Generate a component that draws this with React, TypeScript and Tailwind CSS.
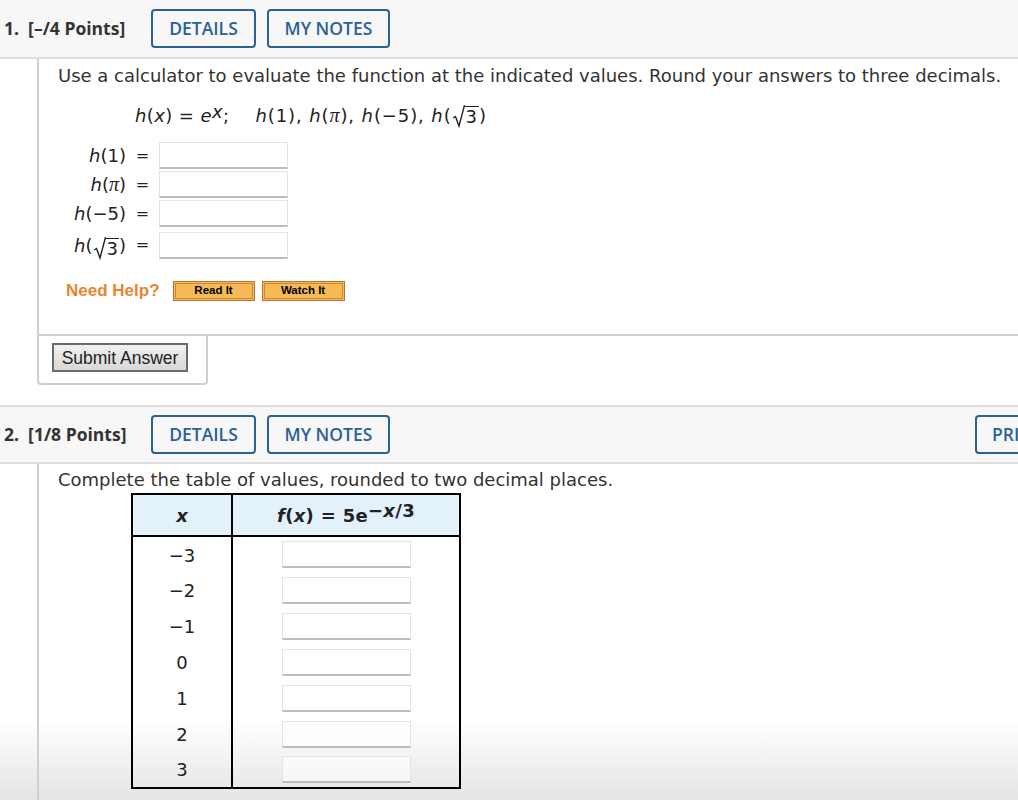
import React from 'react';

const verdana = { fontFamily: '"DejaVu Sans", Verdana, sans-serif' };
const arial = { fontFamily: 'Arial, "Liberation Sans", sans-serif' };

const HeaderBar: React.FC<{ num: string; points: string; print?: boolean; top?: boolean }> = ({ num, points, print, top }) => (
  <div
    className={`relative z-10 flex items-center h-[59px] bg-[#f7f7f7] border-b-2 border-[#dedede] overflow-hidden ${top ? '' : 'border-t-2'}`}
    style={{ fontFamily: '"Open Sans", sans-serif' }}
  >
    <div className="pl-[4px] w-[151px] text-[17.5px] font-bold text-[#333] whitespace-pre">
      {num}  {points}
    </div>
    <button className="h-[39px] w-[105px] border-2 border-[#2a6197] rounded-[4px] text-[17.5px] font-semibold text-[#2a6197]">
      DETAILS
    </button>
    <button className="ml-[11px] h-[39px] w-[123px] border-2 border-[#2a6197] rounded-[4px] text-[17.5px] font-semibold text-[#2a6197]">
      MY NOTES
    </button>
    {print && (
      <button className="ml-auto mr-[-80px] shrink-0 h-[39px] w-[123px] border-2 border-[#2a6197] rounded-[4px] text-[17.5px] font-semibold text-[#2a6197] text-left pl-[15px]">
        PRINTER
      </button>
    )}
  </div>
);

const Input: React.FC = () => (
  <div className="w-[129px] h-[27px] bg-white/60 border border-[#e3e3e3] border-b-[#bdbdbd] border-b-2 rounded-[1px]" />
);

const H = () => <i>h</i>;
const Pi = () => (
  <span style={{ fontFamily: '"Liberation Serif", serif' }} className="italic text-[20px] leading-none">
    π
  </span>
);

const Sqrt3 = () => (
  <span className="inline-flex items-end align-bottom">
    <svg width="13" height="24" viewBox="0 0 13 24" className="mb-[-1px]">
      <path d="M1 14 L3.5 12.5 L7 22 L12.5 1.2" fill="none" stroke="#222" strokeWidth="1.4" />
    </svg>
    <span className="border-t-[1.5px] border-[#222] leading-[20px] pl-[1px] pr-[1px]">3</span>
  </span>
);

const rows: { label: React.ReactNode; tall?: boolean }[] = [
  { label: <><H />(1)</> },
  { label: <><H />(<Pi />)</> },
  { label: <><H />(−5)</> },
  { label: <><H />(<Sqrt3 />)</>, tall: true },
];

const HelpButton: React.FC<{ label: string; w: string }> = ({ label, w }) => (
  <button className={`${w} h-[20px] bg-[#f5b955] border border-[#b8732e] p-[1px]`} style={arial}>
    <span className="flex items-center justify-center h-full border border-[#c98a3f] text-[11.5px] font-bold text-black">
      {label}
    </span>
  </button>
);

const tableX = ['−3', '−2', '−1', '0', '1', '2', '3'];

export default function App() {
  return (
    <div className="relative w-[1018px] h-[800px] overflow-hidden bg-white text-[#333]">
      {/* bottom fade behind content */}
      <div className="pointer-events-none absolute left-0 right-0 bottom-0 h-[80px] bg-gradient-to-b from-white to-[#e4e4e4]" />

      <HeaderBar num="1." points="[–/4 Points]" top />

      {/* Question 1 body */}
      <div className="relative ml-[37px] border-l-2 border-b-2 border-[#cfcfcf] pl-[19px] h-[277px]" style={verdana}>
        <p className="pt-[2px] text-[18px] leading-[30px] text-[#333] whitespace-nowrap">
          Use a calculator to evaluate the function at the indicated values. Round your answers to three decimals.
        </p>
        <div className="pl-[77px] mt-[8px] text-[18px] leading-[22px] text-[#222] flex items-end h-[28px]">
          <span className="tracking-[0.4px]">
            <H />(<i>x</i>) = <i>e</i>
            <sup className="text-[18px] relative top-[-4px]"><i>x</i></sup>;
          </span>
          <span className="ml-[26px] whitespace-pre tracking-[0.9px]">
            <H />(1), <H />(<Pi />), <H />(−5), <H />(<Sqrt3 />)
          </span>
        </div>
        <div className="mt-[14px] flex flex-col text-[18px] text-[#222]">
          {rows.map((r, i) => (
            <div key={i} className={`flex items-center ${r.tall ? 'h-[32px] mt-[1px]' : 'h-[29px]'}`}>
              <div className="w-[68px] whitespace-nowrap text-right">
                <span>{r.label}</span>
              </div>
              <div className="w-[33px] text-center text-[16px]">=</div>
              <Input />
            </div>
          ))}
        </div>
        <div className="flex items-center mt-[17px] pl-[8px]">
          <span className="text-[17px] font-bold text-[#e5862f] mr-[13px]" style={arial}>
            Need Help?
          </span>
          <HelpButton label="Read It" w="w-[82px]" />
          <span className="w-[7px]" />
          <HelpButton label="Watch It" w="w-[83px]" />
        </div>
      </div>

      {/* Submit box */}
      <div className="relative ml-[37px] w-[171px] h-[49px] border-l-2 border-r-2 border-b-2 border-[#cfcfcf] rounded-b-[4px] pl-[13px] pt-[7px]">
        <button
          className="w-[136px] h-[29px] border-2 border-[#6b6b6b] bg-gradient-to-b from-[#f0f0f0] to-[#d8d8d8] text-[17.5px] text-[#222] whitespace-nowrap"
          style={arial}
        >
          Submit Answer
        </button>
      </div>

      <div className="h-[20px]" />
      <HeaderBar num="2." points="[1/8 Points]" print />

      {/* Question 2 body */}
      <div className="relative ml-[37px] border-l-2 border-[#cfcfcf] pl-[19px] h-[400px]" style={verdana}>
        <p className="pt-[3px] text-[18px] leading-[26px] text-[#333]">
          Complete the table of values, rounded to two decimal places.
        </p>
        <table className="ml-[73px] border-collapse border-2 border-black text-[18px] text-[#222]">
          <thead>
            <tr className="bg-[#e3f1fb] h-[42px]">
              <th className="w-[100px] border-r-2 border-b-2 border-black font-bold italic">x</th>
              <th className="w-[228px] border-b-2 border-black font-bold whitespace-nowrap tracking-[0.3px]">
                <i>f</i>(<i>x</i>) = 5<span>e</span>
                <sup className="text-[18px] relative top-[-5px]"><i>−x</i>/3</sup>
              </th>
            </tr>
          </thead>
          <tbody>
            {tableX.map((x, i) => (
              <tr key={x} className="h-[36px]">
                <td className={`border-r-2 border-black text-center ${i === 0 ? 'pt-[2px]' : ''}`}>{x}</td>
                <td className="align-middle">
                  <div className="flex justify-center pl-[1px]">
                    <Input />
                  </div>
                </td>
              </tr>
            ))}
          </tbody>
        </table>
      </div>
    </div>
  );
}
